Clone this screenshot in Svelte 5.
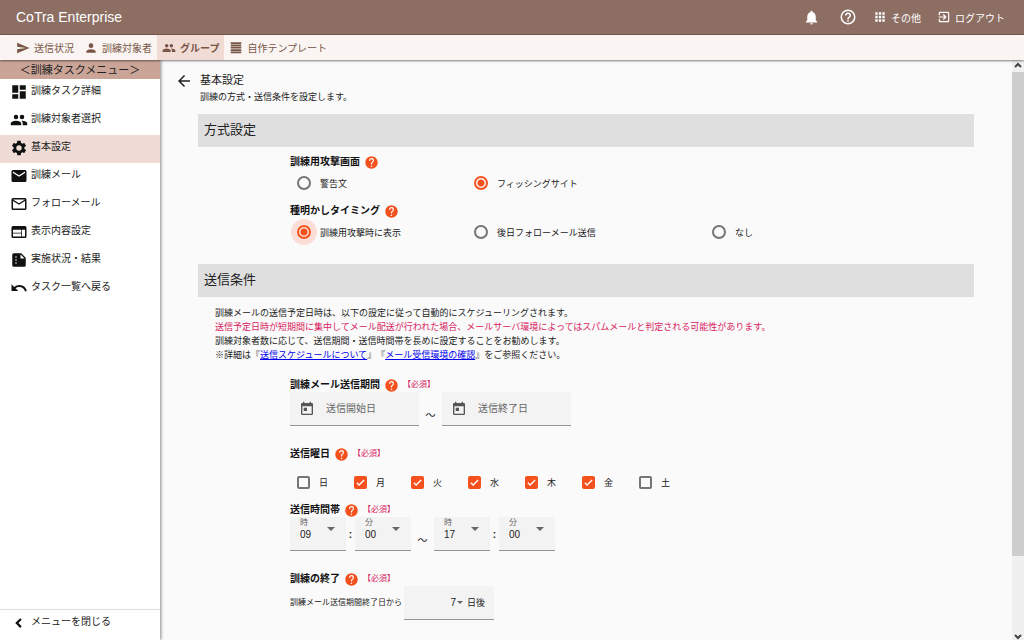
<script>
  const icons = {
    send: 'M2 21l21-9L2 3v7l15 2-15 2z',
    person: 'M12 12a4 4 0 1 0 0-8 4 4 0 0 0 0 8zm0 2c-2.7 0-8 1.3-8 4v2h16v-2c0-2.700-5.300-4-8-4z',
    group: 'M16 11a3 3 0 1 0 0-6 3 3 0 0 0 0 6zm-8 0a3 3 0 1 0 0-6 3 3 0 0 0 0 6zm0 2c-2.330 0-7 1.170-7 3.500V19h14v-2.500C15 14.170 10.330 13 8 13zm8 0c-.29 0-.62.02-.97.05C16.190 13.890 17 15.020 17 16.500V19h6v-2.500c0-2.330-4.670-3.500-7-3.500z',
    lines: 'M3 2h18v3H3zM3 6h18v3H3zM3 10h18v3H3zM3 14h18v3H3zM3 18h18v3H3z',
    bell: 'M12 22a2 2 0 0 0 2-2h-4a2 2 0 0 0 2 2zm6-6v-5c0-3.070-1.630-5.640-4.500-6.320V4a1.500 1.500 0 0 0-3 0v.68C7.640 5.360 6 7.920 6 11v5l-2 2v1h16v-1z',
    help: 'M11 18h2v-2h-2v2zm1-16a10 10 0 1 0 0 20 10 10 0 0 0 0-20zm0 18a8 8 0 1 1 0-16 8 8 0 0 1 0 16zm0-14a4 4 0 0 0-4 4h2a2 2 0 1 1 4 0c0 2-3 1.750-3 5h2c0-2.250 3-2.500 3-5a4 4 0 0 0-4-4z',
    helpFill: 'M12 2a10 10 0 1 0 0 20 10 10 0 0 0 0-20zm1 17h-2v-2h2zm2.070-7.750l-.9.920C13.450 12.900 13 13.500 13 15h-2v-.5c0-1.100.45-2.100 1.170-2.830l1.240-1.260A2 2 0 1 0 10 9H8a4 4 0 1 1 7.070 2.250z',
    apps: 'M4 8h4V4H4zm6 12h4v-4h-4zm-6 0h4v-4H4zm0-6h4v-4H4zm6 0h4v-4h-4zm6-10v4h4V4zm-6 4h4V4h-4zm6 6h4v-4h-4zm0 6h4v-4h-4z',
    exit: 'M10.090 15.590L11.500 17l5-5-5-5-1.410 1.410L12.670 11H3v2h9.670zM19 3H5a2 2 0 0 0-2 2v4h2V5h14v14H5v-4H3v4a2 2 0 0 0 2 2h14a2 2 0 0 0 2-2V5a2 2 0 0 0-2-2z',
    dashboard: 'M3 13h8V3H3zm0 8h8v-6H3zm10 0h8V11h-8zm0-18v6h8V3z',
    gear: 'M19.140 12.940c.04-.3.060-.61.060-.94s-.02-.64-.07-.94l2.030-1.580a.5.5 0 0 0 .12-.61l-1.920-3.320a.5.5 0 0 0-.59-.22l-2.390.96a7 7 0 0 0-1.620-.94l-.36-2.540a.5.5 0 0 0-.48-.41h-3.840a.5.5 0 0 0-.47.41l-.36 2.540a7 7 0 0 0-1.620.94l-2.390-.96a.5.5 0 0 0-.59.22L2.730 8.870a.5.5 0 0 0 .12.61l2.030 1.580a6 6 0 0 0 0 1.880l-2.030 1.580a.5.5 0 0 0-.12.61l1.920 3.320c.12.22.37.29.59.22l2.390-.96c.5.38 1.030.7 1.620.94l.36 2.540c.05.24.24.41.48.41h3.840c.24 0 .44-.17.47-.41l.36-2.540a7 7 0 0 0 1.620-.94l2.390.96c.22.080.47 0 .59-.22l1.920-3.320a.5.5 0 0 0-.12-.61zM12 15.600a3.600 3.600 0 1 1 0-7.200 3.600 3.600 0 0 1 0 7.200z',
    mail: 'M20 4H4a2 2 0 0 0-2 2v12a2 2 0 0 0 2 2h16a2 2 0 0 0 2-2V6a2 2 0 0 0-2-2zm0 4l-8 5-8-5V6l8 5 8-5z',
    mailOutline: 'M20 4H4a2 2 0 0 0-2 2v12a2 2 0 0 0 2 2h16a2 2 0 0 0 2-2V6a2 2 0 0 0-2-2zm0 14H4V8l8 5 8-5zm-8-7L4 6h16z',
    web: 'M20 4H4a2 2 0 0 0-2 2v12a2 2 0 0 0 2 2h16a2 2 0 0 0 2-2V6a2 2 0 0 0-2-2zm-5 14H4v-4h11zm0-5H4V9h11zm5 5h-4V9h4z',
    report: 'M15 3H5a2 2 0 0 0-2 2v14a2 2 0 0 0 2 2h14a2 2 0 0 0 2-2V9zM8 17a1 1 0 1 1 0-2 1 1 0 0 1 0 2zm0-4a1 1 0 1 1 0-2 1 1 0 0 1 0 2zm0-4a1 1 0 1 1 0-2 1 1 0 0 1 0 2zm6 1V4.500l5.500 5.500z',
    undo: 'M12.500 8c-2.650 0-5.050.99-6.900 2.600L2 7v9h9l-3.620-3.620a8 8 0 0 1 12.710 4.390l2.370-.78A10.500 10.500 0 0 0 12.500 8z',
    chevron: 'M15.600 7.600L13.500 5.500l-6.500 6.500 6.500 6.500 2.100-2.100L11.200 12z',
    back: 'M20 11H7.830l5.590-5.590L12 4l-8 8 8 8 1.410-1.410L7.830 13H20z',
    calendar: 'M19 3h-1V1h-2v2H8V1H6v2H5a2 2 0 0 0-2 2v14a2 2 0 0 0 2 2h14a2 2 0 0 0 2-2V5a2 2 0 0 0-2-2zm0 16H5V8h14zM7 10h5v5H7z'
  };

  const tabs = [
    { icon: 'send', label: '送信状況' },
    { icon: 'person', label: '訓練対象者' },
    { icon: 'group', label: 'グループ', active: true },
    { icon: 'lines', label: '自作テンプレート' }
  ];

  const menu = [
    { icon: 'dashboard', label: '訓練タスク詳細' },
    { icon: 'group', label: '訓練対象者選択' },
    { icon: 'gear', label: '基本設定', active: true },
    { icon: 'mail', label: '訓練メール' },
    { icon: 'mailOutline', label: 'フォローメール' },
    { icon: 'web', label: '表示内容設定' },
    { icon: 'report', label: '実施状況・結果' },
    { icon: 'undo', label: 'タスク一覧へ戻る' }
  ];

  const screens = ['警告文', 'フィッシングサイト'];
  const timings = ['訓練用攻撃時に表示', '後日フォローメール送信', 'なし'];
  const hours = Array.from({ length: 24 }, (_, i) => String(i).padStart(2, '0'));
  const minutes = ['00', '15', '30', '45'];

  let screen = $state('フィッシングサイト');
  let timing = $state('訓練用攻撃時に表示');
  let startHour = $state('09');
  let startMinute = $state('00');
  let endHour = $state('17');
  let endMinute = $state('00');
  let endAfter = $state('7');
  let days = $state([
    { label: '日', on: false },
    { label: '月', on: true },
    { label: '火', on: true },
    { label: '水', on: true },
    { label: '木', on: true },
    { label: '金', on: true },
    { label: '土', on: false }
  ]);
</script>

{#snippet icon(name, size)}
  <svg class="icon" width={size} height={size} viewBox="0 0 24 24" aria-hidden="true">
    <path d={icons[name]} fill="currentColor" fill-rule="evenodd" />
  </svg>
{/snippet}

{#snippet title(text, required)}
  <h3 class="field-title">
    {text}
    <button class="hint" aria-label="ヘルプ">{@render icon('helpFill', 15)}</button>
    {#if required}<span class="required">【必須】</span>{/if}
  </h3>
{/snippet}

<div class="page">
  <header class="topbar">
    <span class="brand">CoTra Enterprise</span>
    <button aria-label="通知">{@render icon('bell', 17)}</button>
    <button aria-label="ヘルプ">{@render icon('help', 18)}</button>
    <div class="links">
      <button>{@render icon('apps', 14)}その他</button>
      <button>{@render icon('exit', 14)}ログアウト</button>
    </div>
  </header>

  <nav class="tabs">
    {#each tabs as tab}
      <a href="#tab" class:active={tab.active}>{@render icon(tab.icon, 14)}{tab.label}</a>
    {/each}
  </nav>

  <div class="body">
    <aside class="sidebar">
      <h2>＜訓練タスクメニュー＞</h2>
      <nav>
        {#each menu as item}
          <a href="#menu" class:active={item.active}>{@render icon(item.icon, 18)}<span>{item.label}</span></a>
        {/each}
      </nav>
      <button class="collapse">{@render icon('chevron', 18)}<span>メニューを閉じる</span></button>
    </aside>

    <main>
      <div class="heading">
        <button aria-label="戻る">{@render icon('back', 18)}</button>
        <div>
          <h1>基本設定</h1>
          <p>訓練の方式・送信条件を設定します。</p>
        </div>
      </div>

      <section>
        <h2>方式設定</h2>
        <div class="fields">
          {@render title('訓練用攻撃画面', false)}
          <div class="options">
            {#each screens as name}
              <label><input type="radio" name="screen" value={name} bind:group={screen} />{name}</label>
            {/each}
          </div>
          {@render title('種明かしタイミング', false)}
          <div class="options ripple">
            {#each timings as name}
              <label><input type="radio" name="timing" value={name} bind:group={timing} />{name}</label>
            {/each}
          </div>
        </div>
      </section>

      <section>
        <h2>送信条件</h2>
        <div class="notes">
          <p>訓練メールの送信予定日時は、以下の設定に従って自動的にスケジューリングされます。</p>
          <p class="warn">送信予定日時が短期間に集中してメール配送が行われた場合、メールサーバ環境によってはスパムメールと判定される可能性があります。</p>
          <p>訓練対象者数に応じて、送信期間・送信時間帯を長めに設定することをお勧めします。</p>
          <p>※詳細は『<a href="#schedule">送信スケジュールについて</a>』『<a href="#mail">メール受信環境の確認</a>』をご参照ください。</p>
        </div>

        <div class="fields conditions">
          <div>
            {@render title('訓練メール送信期間', true)}
            <div class="row">
              <label class="date">{@render icon('calendar', 16)}<input type="text" placeholder="送信開始日" aria-label="送信開始日" /></label>
              <span class="tilde">～</span>
              <label class="date">{@render icon('calendar', 16)}<input type="text" placeholder="送信終了日" aria-label="送信終了日" /></label>
            </div>
          </div>

          <div>
            {@render title('送信曜日', true)}
            <div class="days">
              {#each days as day}
                <label>
                  <input type="checkbox" bind:checked={day.on} />
                  <svg class="tick" viewBox="0 0 24 24" aria-hidden="true"><path d="M4 12.500l5 5L20 6.500" /></svg>
                  {day.label}
                </label>
              {/each}
            </div>
            {@render title('送信時間帯', true)}
            <div class="row">
              <label class="time"><span>時</span>
                <select bind:value={startHour}>{#each hours as h}<option>{h}</option>{/each}</select>
              </label>
              <span class="colon">:</span>
              <label class="time"><span>分</span>
                <select bind:value={startMinute}>{#each minutes as m}<option>{m}</option>{/each}</select>
              </label>
              <span class="tilde">～</span>
              <label class="time"><span>時</span>
                <select bind:value={endHour}>{#each hours as h}<option>{h}</option>{/each}</select>
              </label>
              <span class="colon">:</span>
              <label class="time"><span>分</span>
                <select bind:value={endMinute}>{#each minutes as m}<option>{m}</option>{/each}</select>
              </label>
            </div>
          </div>

          <div>
            {@render title('訓練の終了', true)}
            <div class="row">
              <label class="after" for="end-after">訓練メール送信期間終了日から</label>
              <div class="days-after">
                <select id="end-after" bind:value={endAfter}>
                  {#each ['1', '3', '5', '7'] as n}<option>{n}</option>{/each}
                </select>
                <i class="caret"></i>
                <span>日後</span>
              </div>
            </div>
          </div>
        </div>
      </section>
    </main>

    <div class="scrollbar" aria-hidden="true">
      <svg viewBox="0 0 12 12"><path d="M3 7l3-3 3 3" /></svg>
      <div class="track"><div class="thumb"></div></div>
      <svg viewBox="0 0 12 12"><path d="M3 7l3 3 3-3" /></svg>
    </div>
  </div>
</div>

<style>
  .page {
    display: flex;
    flex-direction: column;
    height: 100vh;
    overflow: hidden;
    background: #fafafa;
    color: #212121;
    font-family: "Liberation Sans", "Noto Sans CJK JP", sans-serif;
    font-size: 10px;
    text-spacing-trim: space-all;
  }

  h1, h2, h3, p {
    margin: 0;
    font-weight: 400;
  }

  button, input, select {
    font: inherit;
    color: inherit;
    margin: 0;
    padding: 0;
    border: 0;
    background: none;
  }

  .icon {
    display: block;
    flex: none;
  }

  .topbar {
    display: flex;
    align-items: center;
    gap: 19px;
    flex: none;
    height: 35px;
    padding: 0 19px 0 16px;
    box-sizing: border-box;
    border-bottom: 1px solid #7b594f;
    background: #8d6e63;
    color: #fff;
  }

  .links {
    display: flex;
    gap: 16px;
    margin-left: -3px;
  }

  .topbar button {
    display: flex;
    align-items: center;
    gap: 4px;
  }

  .brand {
    flex: 1;
    font-size: 14px;
  }

  .tabs {
    display: flex;
    flex: none;
    height: 25px;
    padding-left: 11px;
    background: #faf5f2;
    box-shadow: 0 1px 2px rgba(0, 0, 0, 0.5);
    position: relative;
    z-index: 2;
  }

  .tabs a {
    display: flex;
    align-items: center;
    gap: 4px;
    padding: 0 5px;
    color: #795548;
    text-decoration: none;
  }

  .tabs a.active {
    background: #f0dcd5;
    font-weight: 700;
  }

  .body {
    display: flex;
    flex: 1;
    min-height: 0;
  }

  .sidebar {
    display: flex;
    flex-direction: column;
    flex: none;
    width: 160px;
    background: #fff;
    box-shadow: 1px 0 3px rgba(0, 0, 0, 0.45);
  }

  .sidebar h2 {
    height: 19px;
    line-height: 20px;
    background: #c9a497;
    font-size: 11px;
    text-align: center;
  }

  .sidebar a, .collapse {
    display: flex;
    gap: 3px;
    height: 28px;
    padding: 0 10px;
    color: #212121;
    text-decoration: none;
    line-height: 24px;
  }

  .sidebar a.active {
    background: #efdcd6;
  }

  .sidebar .icon {
    margin-top: 4px;
    color: #111;
  }

  .collapse {
    margin-top: auto;
    height: 31px;
    border-top: 1px solid #e0e0e0;
  }

  main {
    flex: 1;
    min-width: 0;
    padding: 12px 38px 0;
    overflow: hidden;
  }

  .heading {
    display: flex;
    gap: 7px;
    height: 42px;
    margin-left: -23px;
  }

  .heading button {
    display: flex;
    align-self: flex-start;
  }

  .heading h1 {
    font-size: 11px;
    line-height: 16px;
  }

  .heading p {
    font-size: 9px;
    line-height: 18px;
  }

  section h2 {
    height: 33px;
    padding-left: 6px;
    background: #dfdfdf;
    font-size: 13px;
    line-height: 32px;
  }

  section + section {
    margin-top: 19px;
  }

  .fields {
    padding: 8px 0 0 92px;
  }

  .field-title {
    display: flex;
    align-items: center;
    gap: 4px;
    height: 14px;
    color: #111;
    font-size: 10px;
    font-weight: 700;
    line-height: 14px;
  }

  .hint {
    color: #f4511e;
  }

  .required {
    color: #d81b60;
    font-size: 8px;
    font-weight: 400;
  }

  .options {
    display: grid;
    grid-template-columns: 177fr 238fr 269fr;
    align-items: center;
    height: 24px;
    margin-top: 2px;
    font-size: 9px;
  }

  .options + .field-title {
    margin-top: 9px;
  }

  .options.ripple {
    margin-bottom: 20px;
  }

  .options label, .days label {
    display: flex;
    align-items: center;
    gap: 9px;
    padding-left: 7px;
  }

  input[type="radio"] {
    width: 14px;
    height: 14px;
    appearance: none;
    border: 2px solid #757575;
    border-radius: 50%;
  }

  input[type="radio"]:checked {
    border-color: #f4511e;
    background: radial-gradient(circle, #f4511e 3px, transparent 4px);
  }

  .ripple input:checked {
    box-shadow: 0 0 0 6px #fbdfd7;
    background: radial-gradient(circle, #f4511e 3px, #fbdfd7 4px);
  }

  .notes {
    padding: 9px 0 0 17px;
    font-size: 9px;
    line-height: 14px;
  }

  .notes a {
    color: #0000ee;
  }

  .notes .warn {
    color: #d81b60;
  }

  .conditions {
    display: flex;
    flex-direction: column;
    gap: 21px;
    padding-top: 16px;
  }

  .row {
    display: flex;
    height: 34px;
  }

  .date, .time, .days-after {
    box-sizing: border-box;
    background: #f3f3f3;
    border-bottom: 1px solid #949494;
  }

  .date {
    display: flex;
    align-items: center;
    gap: 11px;
    width: 129px;
    padding-left: 9px;
    color: #555;
  }

  .date input {
    flex: 1;
    min-width: 0;
  }

  .date input::placeholder {
    color: #666;
    opacity: 1;
  }

  .tilde {
    width: 23px;
    padding-top: 16px;
    line-height: 16px;
    text-align: center;
  }

  .colon {
    width: 9px;
    padding-top: 10px;
    font-weight: 700;
    line-height: 16px;
    text-align: center;
  }

  .days {
    display: flex;
    align-items: center;
    height: 24px;
    margin: 9px 0;
    font-size: 9px;
  }

  .days label {
    position: relative;
    width: 50px;
  }

  .days input {
    width: 13px;
    height: 13px;
    appearance: none;
    border: 2px solid #757575;
    border-radius: 2px;
  }

  .days input:checked {
    border-color: #f4511e;
    background: #f4511e;
  }

  .tick {
    position: absolute;
    left: 8px;
    width: 11px;
    height: 11px;
    fill: none;
    stroke: #fff;
    stroke-width: 3;
    pointer-events: none;
  }

  input:not(:checked) + .tick {
    visibility: hidden;
  }

  .time {
    position: relative;
    width: 56px;
    padding-left: 10px;
  }

  .time span {
    display: block;
    height: 12px;
    color: #666;
    font-size: 8px;
    line-height: 12px;
  }

  .time select {
    display: block;
    width: 100%;
    height: 12px;
    appearance: none;
    line-height: 12px;
  }

  .time::after, .caret {
    border: 4px solid transparent;
    border-top-color: #666;
    border-bottom: 0;
  }

  .time::after {
    content: "";
    position: absolute;
    top: 10px;
    right: 11px;
  }

  .after {
    width: 114px;
    font-size: 8px;
    line-height: 34px;
    white-space: nowrap;
  }

  .days-after {
    display: flex;
    align-items: center;
    width: 90px;
    padding-right: 9px;
    font-size: 9px;
  }

  .days-after select {
    flex: 1;
    appearance: none;
    font-size: 10px;
    text-align: right;
    text-align-last: right;
  }

  .caret {
    margin: 0 4px 0 1px;
    border-width: 3px 3px 0;
  }

  .scrollbar {
    display: flex;
    flex-direction: column;
    flex: none;
    width: 12px;
    background: #f0f0f0;
  }

  .scrollbar svg {
    width: 12px;
    height: 12px;
    fill: none;
    stroke: #444;
    stroke-width: 2;
  }

  .track {
    flex: 1;
  }

  .thumb {
    height: 87%;
    background: #cdcdcd;
  }
</style>
